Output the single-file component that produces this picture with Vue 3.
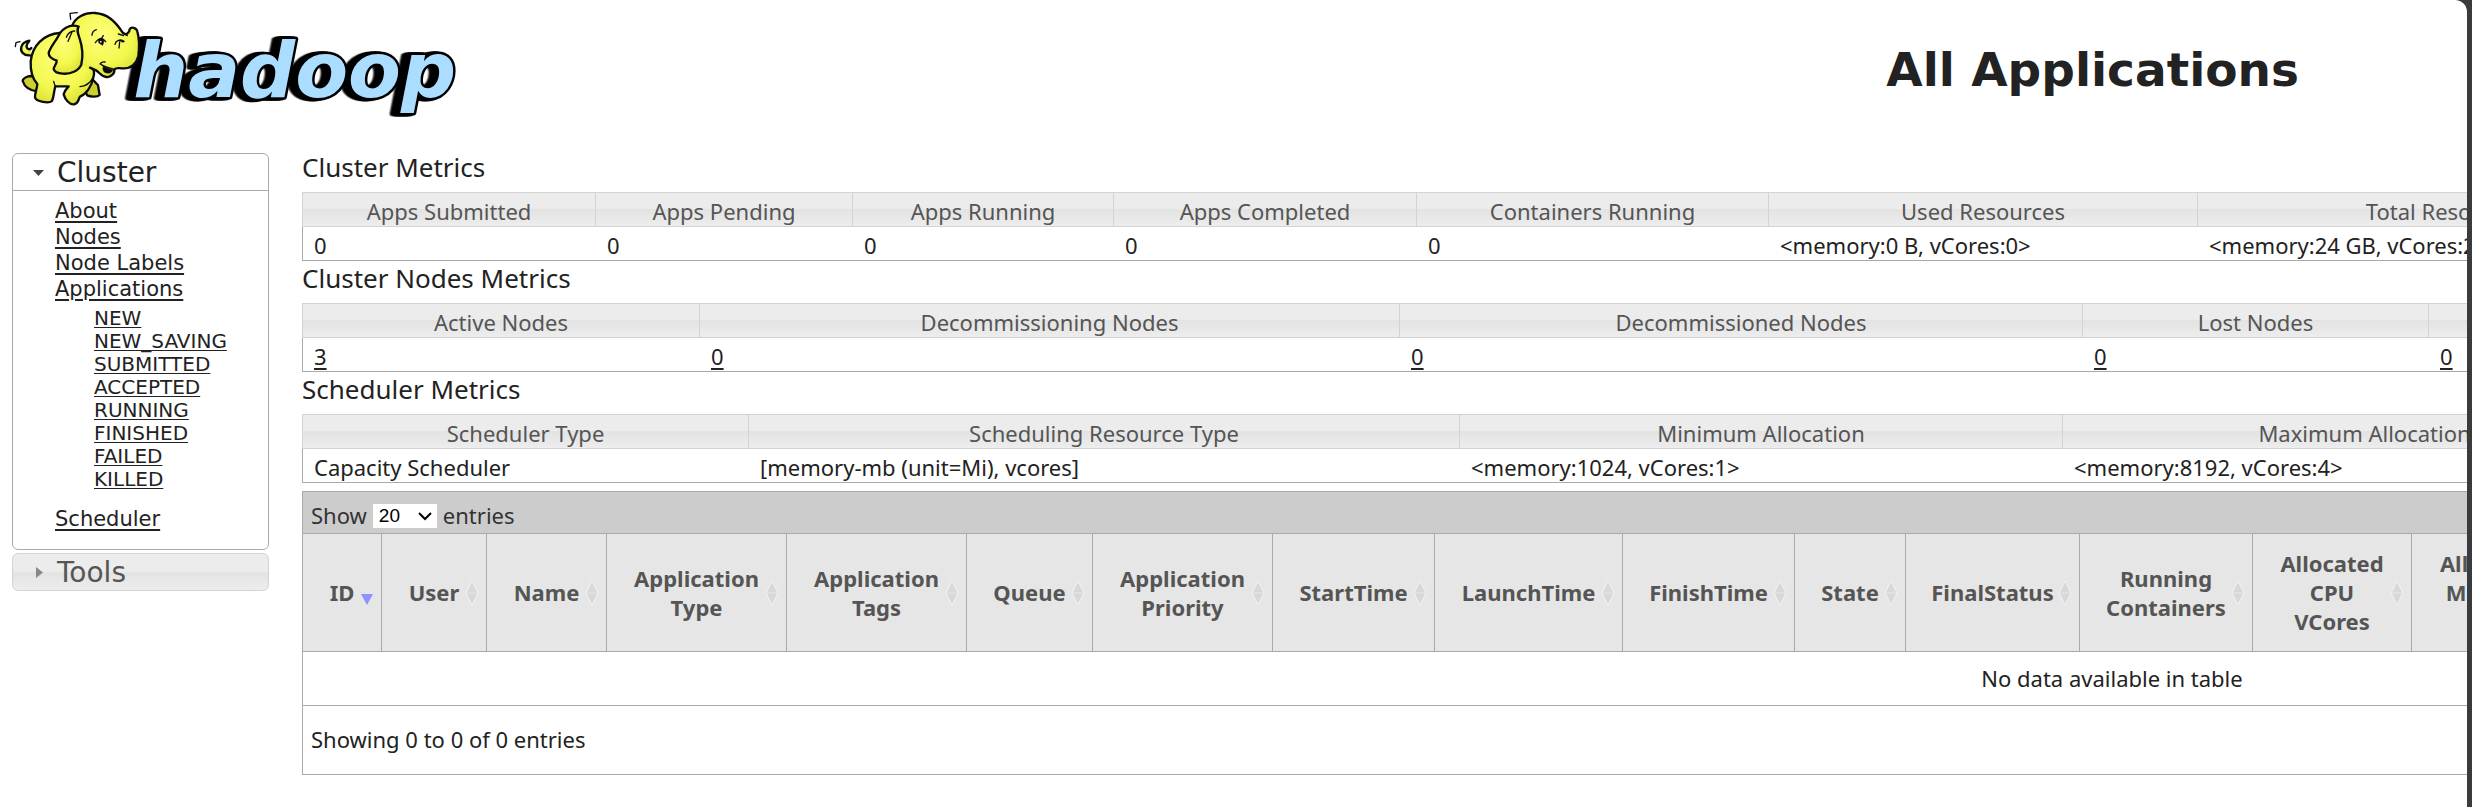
<script setup>
import { ref } from 'vue'

const pageSize = ref('20')

const clusterLinks = ['About', 'Nodes', 'Node Labels', 'Applications']
const stateLinks = ['NEW', 'NEW_SAVING', 'SUBMITTED', 'ACCEPTED', 'RUNNING', 'FINISHED', 'FAILED', 'KILLED']

const metrics = [
  {
    title: 'Cluster Metrics',
    linked: false,
    columns: [
      { label: 'Apps Submitted', value: '0', width: 293 },
      { label: 'Apps Pending', value: '0', width: 257 },
      { label: 'Apps Running', value: '0', width: 261 },
      { label: 'Apps Completed', value: '0', width: 303 },
      { label: 'Containers Running', value: '0', width: 352 },
      { label: 'Used Resources', value: '<memory:0 B, vCores:0>', width: 429 },
      { label: 'Total Resources', value: '<memory:24 GB, vCores:24>', width: 498 },
      { label: '', value: '', width: 1227 }
    ]
  },
  {
    title: 'Cluster Nodes Metrics',
    linked: true,
    columns: [
      { label: 'Active Nodes', value: '3', width: 397 },
      { label: 'Decommissioning Nodes', value: '0', width: 700 },
      { label: 'Decommissioned Nodes', value: '0', width: 683 },
      { label: 'Lost Nodes', value: '0', width: 346 },
      { label: '', value: '0', width: 1494 }
    ]
  },
  {
    title: 'Scheduler Metrics',
    linked: false,
    columns: [
      { label: 'Scheduler Type', value: 'Capacity Scheduler', width: 446 },
      { label: 'Scheduling Resource Type', value: '[memory-mb (unit=Mi), vcores]', width: 711 },
      { label: 'Minimum Allocation', value: '<memory:1024, vCores:1>', width: 603 },
      { label: 'Maximum Allocation', value: '<memory:8192, vCores:4>', width: 604 },
      { label: '', value: '', width: 1256 }
    ]
  }
]

const appColumns = [
  { lines: ['ID'], width: 78, sorted: true },
  { lines: ['User'], width: 105 },
  { lines: ['Name'], width: 120 },
  { lines: ['Application', 'Type'], width: 180 },
  { lines: ['Application', 'Tags'], width: 180 },
  { lines: ['Queue'], width: 126 },
  { lines: ['Application', 'Priority'], width: 180 },
  { lines: ['StartTime'], width: 162 },
  { lines: ['LaunchTime'], width: 188 },
  { lines: ['FinishTime'], width: 172 },
  { lines: ['State'], width: 111 },
  { lines: ['FinalStatus'], width: 174 },
  { lines: ['Running', 'Containers'], width: 173 },
  { lines: ['Allocated', 'CPU', 'VCores'], width: 159 },
  { lines: ['Allocated', 'Memory', 'MB'], width: 160 },
  { lines: [], width: 1350 }
]
</script>

<template>
  <div class="page">
    <header class="masthead">
      <a href="#" class="brand" aria-label="hadoop">
        <svg class="logo" viewBox="0 0 1440 390" aria-hidden="true">
          <defs>
            <radialGradient id="hide" cx="0.45" cy="0.35" r="0.75">
              <stop offset="0" stop-color="#ffff7a" />
              <stop offset="0.6" stop-color="#f3f84f" />
              <stop offset="1" stop-color="#d3d92e" />
            </radialGradient>
          </defs>
          <text class="word" x="400" y="291">hadoop</text>
          <g class="elephant">
            <path class="thin" d="M212 58 L210 40 L232 38 M46 140 L48 128 L60 125" />
            <path d="M90 166 C72 168 60 155 64 141 C67 130 78 124 88 122 C80 132 76 140 83 146 C88 149 92 147 94 144" />
            <path class="back" d="M94 228 C80 228 68 236 68 243 C74 262 92 272 112 274 L116 240 Z" />
            <path class="back" d="M276 236 L294 256 L299 285 C291 293 270 290 262 286 L248 262 Z" />
            <path d="M180 99 C130 102 96 138 92 185 C91 215 98 237 112 252 C111 266 104 281 105 292 C108 306 148 311 156 303 C162 290 161 276 166 259 L206 259 C199 266 193 275 191 283 C195 298 209 315 222 313 C237 309 234 298 240 290 C258 283 275 260 280 232 C285 216 281 206 274 204 L250 150 Z" />
            <path class="smooth" d="M216 78 C226 52 254 37 285 39 C322 42 345 62 368 98 C378 108 389 98 389 88 C393 80 409 82 412 94 C417 112 418 144 415 169 C409 193 391 205 372 205 C358 206 350 201 343 208 C345 220 332 233 319 231 C305 230 300 219 288 211 L274 204 L240 196 L216 78 Z" />
            <path class="outline" d="M216 78 C226 52 254 37 285 39 C322 42 345 62 368 98 C378 108 389 98 389 88 C393 80 409 82 412 94 C417 112 418 144 415 169 C409 193 391 205 372 205 C358 206 350 201 343 208 C345 220 332 233 319 231 C305 230 300 219 288 211 L270 203" />
            <path d="M180 99 C194 82 214 72 236 80 C229 91 234 101 239 116 C248 143 248 175 244 193 C237 213 211 223 188 221 C172 220 163 216 161 207 C163 197 171 190 170 182 C156 177 146 169 146 159 C151 140 170 121 180 99 Z" />
            <path class="thin" d="M199 112 C204 98 212 93 224 93 M216 96 L204 124 M276 106 C276 98 281 92 289 89 M286 128 C294 115 307 111 317 125 M306 113 L310 107 M355 102 L371 107 M368 98 L382 107 M348 126 C357 118 365 118 372 124 M345 133 C347 121 358 117 369 126 M359 126 L357 144 M300 192 C304 187 311 185 315 186 M304 194 C315 201 329 204 343 208 M166 259 C164 254 162 248 161 244 M280 232 C270 250 255 259 240 260" />
            <path class="ink" d="M296 117 Q306 110 312 122 L308 136 L297 129 Z M310 199 C321 204 330 208 338 209 C337 221 320 222 312 215 C307 209 309 203 310 199 Z" />
            <path class="white" d="M299 122 L305 124 L303 130 Z" />
          </g>
        </svg>
      </a>
      <h1>All Applications</h1>
    </header>

    <div class="layout">
      <nav class="sidebar" aria-label="Main">
        <section class="panel">
          <button type="button" class="panel-head open" aria-expanded="true">
            <svg class="caret" viewBox="0 0 12 12" aria-hidden="true"><path d="M0 3H11L5.500 9Z" /></svg>
            Cluster
          </button>
          <ul class="links">
            <li v-for="link in clusterLinks" :key="link"><a href="#">{{ link }}</a></li>
            <li>
              <ul class="states">
                <li v-for="state in stateLinks" :key="state"><a href="#">{{ state }}</a></li>
              </ul>
            </li>
            <li><a href="#">Scheduler</a></li>
          </ul>
        </section>
        <button type="button" class="panel-head closed" aria-expanded="false">
          <svg class="caret" viewBox="0 0 12 12" aria-hidden="true"><path d="M3 0V11L10 5.500Z" /></svg>
          Tools
        </button>
      </nav>

      <main class="content">
        <div class="wide">
          <section v-for="group in metrics" :key="group.title">
            <h2>{{ group.title }}</h2>
            <table class="metrics">
              <colgroup>
                <col v-for="(c, i) in group.columns" :key="i" :style="{ width: c.width + 'px' }" />
              </colgroup>
              <thead>
                <tr><th v-for="(c, i) in group.columns" :key="i" scope="col">{{ c.label }}</th></tr>
              </thead>
              <tbody>
                <tr>
                  <td v-for="(c, i) in group.columns" :key="i">
                    <a v-if="group.linked" href="#">{{ c.value }}</a>
                    <template v-else>{{ c.value }}</template>
                  </td>
                </tr>
              </tbody>
            </table>
          </section>

          <section class="apps">
            <div class="toolbar">
              <label for="page-size">Show</label>
              <span class="picker">
                <select id="page-size" v-model="pageSize">
                  <option>20</option>
                  <option>40</option>
                  <option>60</option>
                  <option>80</option>
                  <option>100</option>
                </select>
                <svg class="chevron" viewBox="0 0 14 9" aria-hidden="true"><path d="M1 1L7 7L13 1" /></svg>
              </span>
              <span>entries</span>
            </div>
            <table class="list">
              <colgroup>
                <col v-for="(c, i) in appColumns" :key="i" :style="{ width: c.width + 'px' }" />
              </colgroup>
              <thead>
                <tr>
                  <th v-for="(c, i) in appColumns" :key="i" scope="col">
                    <button v-if="c.lines.length" type="button" class="sort">
                      <span v-for="line in c.lines" :key="line">{{ line }}</span>
                      <svg class="sort-icon" viewBox="0 0 14 26" aria-hidden="true">
                        <path v-if="c.sorted" class="active" d="M1 14H13L7 25Z" />
                        <template v-else>
                          <path class="idle" d="M7 1L13 13L7 25L1 13Z" />
                          <path class="split" d="M2 13H12" />
                        </template>
                      </svg>
                    </button>
                  </th>
                </tr>
              </thead>
              <tbody>
                <tr><td :colspan="appColumns.length">No data available in table</td></tr>
              </tbody>
            </table>
            <p class="summary">Showing 0 to 0 of 0 entries</p>
          </section>
        </div>
      </main>
    </div>
  </div>
</template>

<style>
body {
  background: #393b3c;
}
</style>

<style scoped>
.page {
  box-sizing: border-box;
  min-height: 100vh;
  margin-right: 5px;
  background: #fff;
  border-top-right-radius: 12px;
  color: #222;
  font: 22px/29px "Noto Sans", "Open Sans", sans-serif;
  overflow: hidden;
}

a {
  color: inherit;
  text-underline-offset: 3px;
  text-decoration-thickness: 2px;
}

button {
  font: inherit;
  color: inherit;
}

ul {
  list-style: none;
  margin: 0;
  padding: 0;
}

.masthead {
  display: flex;
  justify-content: space-between;
  align-items: flex-start;
  padding: 0 168px 20px 0;
}

.brand,
.logo {
  display: block;
}

.logo {
  width: 480px;
  height: 130px;
}

.word {
  font: italic bold 231px "DejaVu Sans", Verdana, sans-serif;
  stroke-linejoin: round;
  fill: #aaddff;
  stroke: #000;
  stroke-width: 15px;
  paint-order: stroke;
  filter: drop-shadow(-8px 2px 0 #000) drop-shadow(-8px 0 0 #000) drop-shadow(-8px 0 0 #000);
}

.elephant path {
  fill: url(#hide);
  stroke: #0c0c0c;
  stroke-width: 7px;
  stroke-linejoin: round;
  stroke-linecap: round;
}

.elephant .back {
  fill: #cbd02e;
}

.elephant .smooth {
  stroke: none;
}

.elephant .outline {
  fill: none;
}

.elephant .thin {
  fill: none;
  stroke-width: 4px;
}

.elephant .ink {
  fill: #0c0c0c;
  stroke-width: 2px;
}

.elephant .white {
  fill: #fff;
  stroke: none;
}

h1 {
  margin: 0;
  padding-top: 40px;
  font: bold 47px/60px "DejaVu Sans", Verdana, sans-serif;
  white-space: nowrap;
}

.layout {
  display: grid;
  grid-template-columns: 257px minmax(0, 1fr);
  column-gap: 33px;
  align-items: start;
  padding-left: 12px;
}

.sidebar {
  display: flex;
  flex-direction: column;
  gap: 3px;
  padding-top: 3px;
  font: 21px/26px "DejaVu Sans", Verdana, sans-serif;
}

.panel {
  border: 1px solid #aaa;
  border-radius: 6px;
}

.panel-head {
  display: flex;
  align-items: center;
  gap: 12px;
  width: 100%;
  box-sizing: border-box;
  margin: 0;
  padding: 1px 0 0 20px;
  border: 0;
  background: none;
  font-size: 28px;
  line-height: 35px;
  text-align: left;
}

.open {
  border-bottom: 1px solid #aaa;
}

.closed {
  border: 1px solid #d3d3d3;
  border-radius: 6px;
  background: linear-gradient(#ececec 50%, #e3e3e3 50%, #ededed);
  color: #555;
}

.caret {
  width: 12px;
  height: 12px;
  fill: #444;
}

.closed .caret {
  fill: #888;
}

.links {
  padding: 7px 0 17px 42px;
}

.states {
  margin: 5px 0 15px;
  padding-left: 39px;
  font-size: 20px;
  line-height: 23px;
}

.states a {
  text-decoration-thickness: 1px;
  text-decoration-skip-ink: none;
  text-underline-offset: 2px;
}

.content {
  overflow: hidden;
}

.wide {
  width: 3620px;
}

h2 {
  margin: 0;
  padding-bottom: 8px;
  font-size: 26px;
  font-weight: 400;
  line-height: 34px;
}

table {
  width: 100%;
  table-layout: fixed;
  border-collapse: separate;
  border-spacing: 0;
}

.metrics th {
  padding: 4px 0 0;
  border: 1px solid #d3d3d3;
  border-right: 0;
  background: linear-gradient(#ececec 50%, #e3e3e3 50%, #ededed);
  color: #555;
  font-weight: 400;
}

.metrics td {
  padding: 4px 0 0 12px;
  border-bottom: 1px solid #aaa;
}

.metrics td:first-child {
  padding-left: 11px;
  border-left: 1px solid #aaa;
}

.apps {
  box-sizing: border-box;
  margin-top: 8px;
  border: 1px solid #aaa;
}

.toolbar {
  display: flex;
  align-items: center;
  gap: 6px;
  padding: 9px 8px 3px;
  background: #ccc;
  color: #333;
}

.picker {
  position: relative;
  display: flex;
}

.picker select {
  appearance: none;
  width: 64px;
  height: 24px;
  padding: 0 0 0 6px;
  border: 0;
  border-radius: 0;
  background: #fff;
  color: #000;
  font: 19px/24px "Liberation Sans", Arial, sans-serif;
}

.chevron {
  position: absolute;
  right: 5px;
  top: 8px;
  width: 14px;
  height: 9px;
  fill: none;
  stroke: #000;
  stroke-width: 2px;
  pointer-events: none;
}

.list th {
  position: relative;
  height: 117px;
  padding: 0;
  border: solid #aaa;
  border-width: 1px 0 1px 1px;
  background: #e6e6e6;
  color: #555;
}

.list th:first-child {
  border-left: 0;
}

.sort {
  display: flex;
  flex-direction: column;
  align-items: center;
  width: 100%;
  padding: 0;
  border: 0;
  background: none;
}

.sort-icon {
  position: absolute;
  right: 7px;
  top: 46px;
  width: 14px;
  height: 26px;
}

.active {
  fill: #9090ff;
}

.idle {
  fill: #d8d8d8;
  stroke: #f4f4f4;
}

.split {
  stroke: #e8e8e8;
}

.list td {
  height: 53px;
  padding: 0;
  border-bottom: 1px solid #aaa;
  text-align: center;
}

.summary {
  margin: 0;
  padding: 19px 8px 20px;
}
</style>
